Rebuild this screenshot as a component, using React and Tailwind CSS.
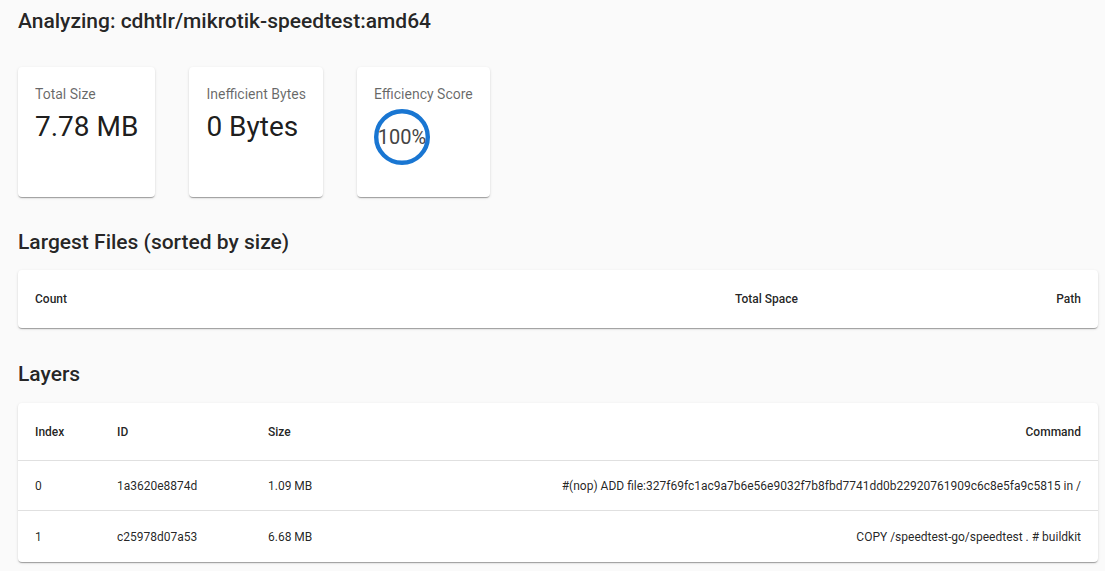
import React from "react";

const shadow =
  "shadow-[0px_2px_1px_-1px_rgba(0,0,0,0.2),0px_1px_1px_0px_rgba(0,0,0,0.14),0px_1px_3px_0px_rgba(0,0,0,0.12)]";

function StatCard({ label, children }) {
  return (
    <div className={`bg-white rounded-[4px] ${shadow} h-[130px] px-[17px] pt-[17px]`}>
      <div className="text-[14px] leading-[20px] text-[rgba(0,0,0,0.6)] whitespace-nowrap">{label}</div>
      {children}
    </div>
  );
}

export default function App() {
  const layers = [
    {
      index: "0",
      id: "1a3620e8874d",
      size: "1.09 MB",
      cmd: "#(nop) ADD file:327f69fc1ac9a7b6e56e9032f7b8fbd7741dd0b22920761909c6c8e5fa9c5815 in /",
    },
    {
      index: "1",
      id: "c25978d07a53",
      size: "6.68 MB",
      cmd: "COPY /speedtest-go/speedtest . # buildkit",
    },
  ];

  return (
    <div
      className="min-h-[571px] bg-[#fafafa] pl-[18px] pr-[7px] pt-[5px] pb-[10px] text-[rgba(0,0,0,0.87)]"
      style={{ fontFamily: "Roboto, 'Noto Sans', Arial, sans-serif" }}
    >
      <h1 className="text-[21px] leading-[32px] font-medium">
        Analyzing: cdhtlr/mikrotik-speedtest:amd64
      </h1>

      <div className="mt-[30px] flex gap-[34px] items-start">
        <StatCard label="Total Size">
          <div className="mt-[6px] text-[28px] leading-[34px] whitespace-nowrap text-[rgba(0,0,0,0.9)]">7.78 MB</div>
        </StatCard>
        <StatCard label="Inefficient Bytes">
          <div className="mt-[6px] text-[28px] leading-[34px] whitespace-nowrap text-[rgba(0,0,0,0.9)]">0 Bytes</div>
        </StatCard>
        <StatCard label="Efficiency Score">
          <div className="relative mt-[5px] w-[56px] h-[56px]">
            <svg width="56" height="56" viewBox="0 0 56 56" className="absolute inset-0">
              <circle cx="28" cy="28" r="25.8" fill="none" stroke="#1976d2" strokeWidth="4.4" />
            </svg>
            <div className="absolute inset-0 flex items-center justify-center text-[20px] leading-none text-[#444]">
              100%
            </div>
          </div>
        </StatCard>
      </div>

      <h2 className="mt-[29px] text-[21px] leading-[32px] font-medium">
        Largest Files (sorted by size)
      </h2>
      <div className={`mt-[12px] bg-white rounded-[4px] ${shadow}`}>
        <div className="grid grid-cols-[700px_1fr_auto] items-center h-[58px] px-[17px] text-[12px] font-medium">
          <div>Count</div>
          <div>Total Space</div>
          <div className="text-right">Path</div>
        </div>
      </div>

      <h2 className="mt-[30px] text-[21px] leading-[32px] font-medium">Layers</h2>
      <div className={`mt-[13px] bg-white rounded-[4px] ${shadow} text-[12px]`}>
        <div className="grid grid-cols-[82px_151px_1fr_auto] items-center h-[58px] px-[17px] font-medium border-b border-[#e0e0e0]">
          <div>Index</div>
          <div>ID</div>
          <div>Size</div>
          <div className="text-right">Command</div>
        </div>
        {layers.map((l, i) => (
          <div
            key={l.index}
            className={`grid grid-cols-[82px_151px_1fr_auto] items-center ${
              i === 0 ? "h-[50px] border-b border-[#e0e0e0]" : "h-[51px]"
            } px-[17px]`}
          >
            <div>{l.index}</div>
            <div>{l.id}</div>
            <div>{l.size}</div>
            <div className="text-right whitespace-nowrap">{l.cmd}</div>
          </div>
        ))}
      </div>
    </div>
  );
}
